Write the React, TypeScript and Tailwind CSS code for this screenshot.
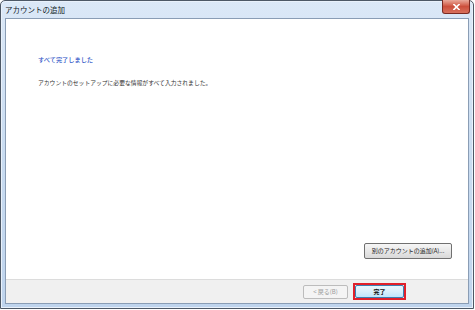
export default function App() {
    const jp = "font-['Noto_Sans_CJK_JP','Noto_Sans',sans-serif]";
    return (
        <div className={`w-[475px] h-[310px] bg-white ${jp}`}>
            {/* Window frame */}
            <div className="w-[474px] h-[309px] flex flex-col border border-[#4d5866] bg-gradient-to-b from-[#dbe8f7] via-[#c9dcf1] to-[#bfd4ed] rounded-t-[5px] shadow-[inset_0_0_0_1px_#e9f1fb]">
                {/* Title bar */}
                <div className="h-[17px] flex items-start justify-between pl-[4px] pr-[3px]">
                    <span className="text-[7.5px] leading-[17px] text-[#111a26]">アカウントの追加</span>
                    <div className="w-[28px] h-[14px] -mt-px rounded-b-[3px] border border-t-0 border-[#7a2a22] bg-gradient-to-b from-[#e9a99b] via-[#cc4f3c] to-[#d8705c] flex items-center justify-center">
                        <svg width="7" height="6" viewBox="0 0 7 6">
                            <path d="M1 0.5 L6 5.5 M6 0.5 L1 5.5" stroke="#fff" strokeWidth="1.6" strokeLinecap="square" />
                        </svg>
                    </div>
                </div>

                {/* Client area */}
                <div className="flex-1 flex flex-col ml-[4px] mr-[4px] mb-[4px] border border-[#8a9db5] bg-white">
                    <div className="flex-1 flex flex-col pl-[32px] pr-[16px] pt-[35px]">
                        <p className="text-[6.2px] leading-[12px] text-[#2b52c6] font-medium">すべて完了しました</p>
                        <p className="mt-[11px] text-[5.8px] leading-[12px] text-[#333]">アカウントのセットアップに必要な情報がすべて入力されました。</p>
                        <div className="mt-auto mb-[20px] flex justify-end">
                            <button className="w-[88px] h-[16px] rounded-[2px] border border-[#707070] bg-gradient-to-b from-[#f6f6f6] via-[#e8e8e8] to-[#d9d9d9] text-[6px] leading-none text-[#222]">
                                別のアカウントの追加(A)...
                            </button>
                        </div>
                    </div>

                    {/* Bottom bar */}
                    <div className="h-[24px] border-t border-[#dcdcdc] bg-[#f0f0f0] flex items-center justify-end gap-[5px] pr-[62px]">
                        <button className="w-[45px] h-[14px] rounded-[2px] border border-[#bcbcbc] bg-[#f4f4f4] text-[6px] leading-none text-[#9a9a9a]">
                            &lt; 戻る(B)
                        </button>
                        <div className="w-[53px] h-[17px] border-2 border-[#e0202a] flex">
                            <button className="flex-1 rounded-[2px] border border-[#3c7fb1] bg-gradient-to-b from-[#eaf6fd] via-[#d9f0fc] to-[#bee6fd] text-[6px] leading-none text-[#111] font-bold">
                                完了
                            </button>
                        </div>
                    </div>
                </div>
            </div>
        </div>
    );
}
